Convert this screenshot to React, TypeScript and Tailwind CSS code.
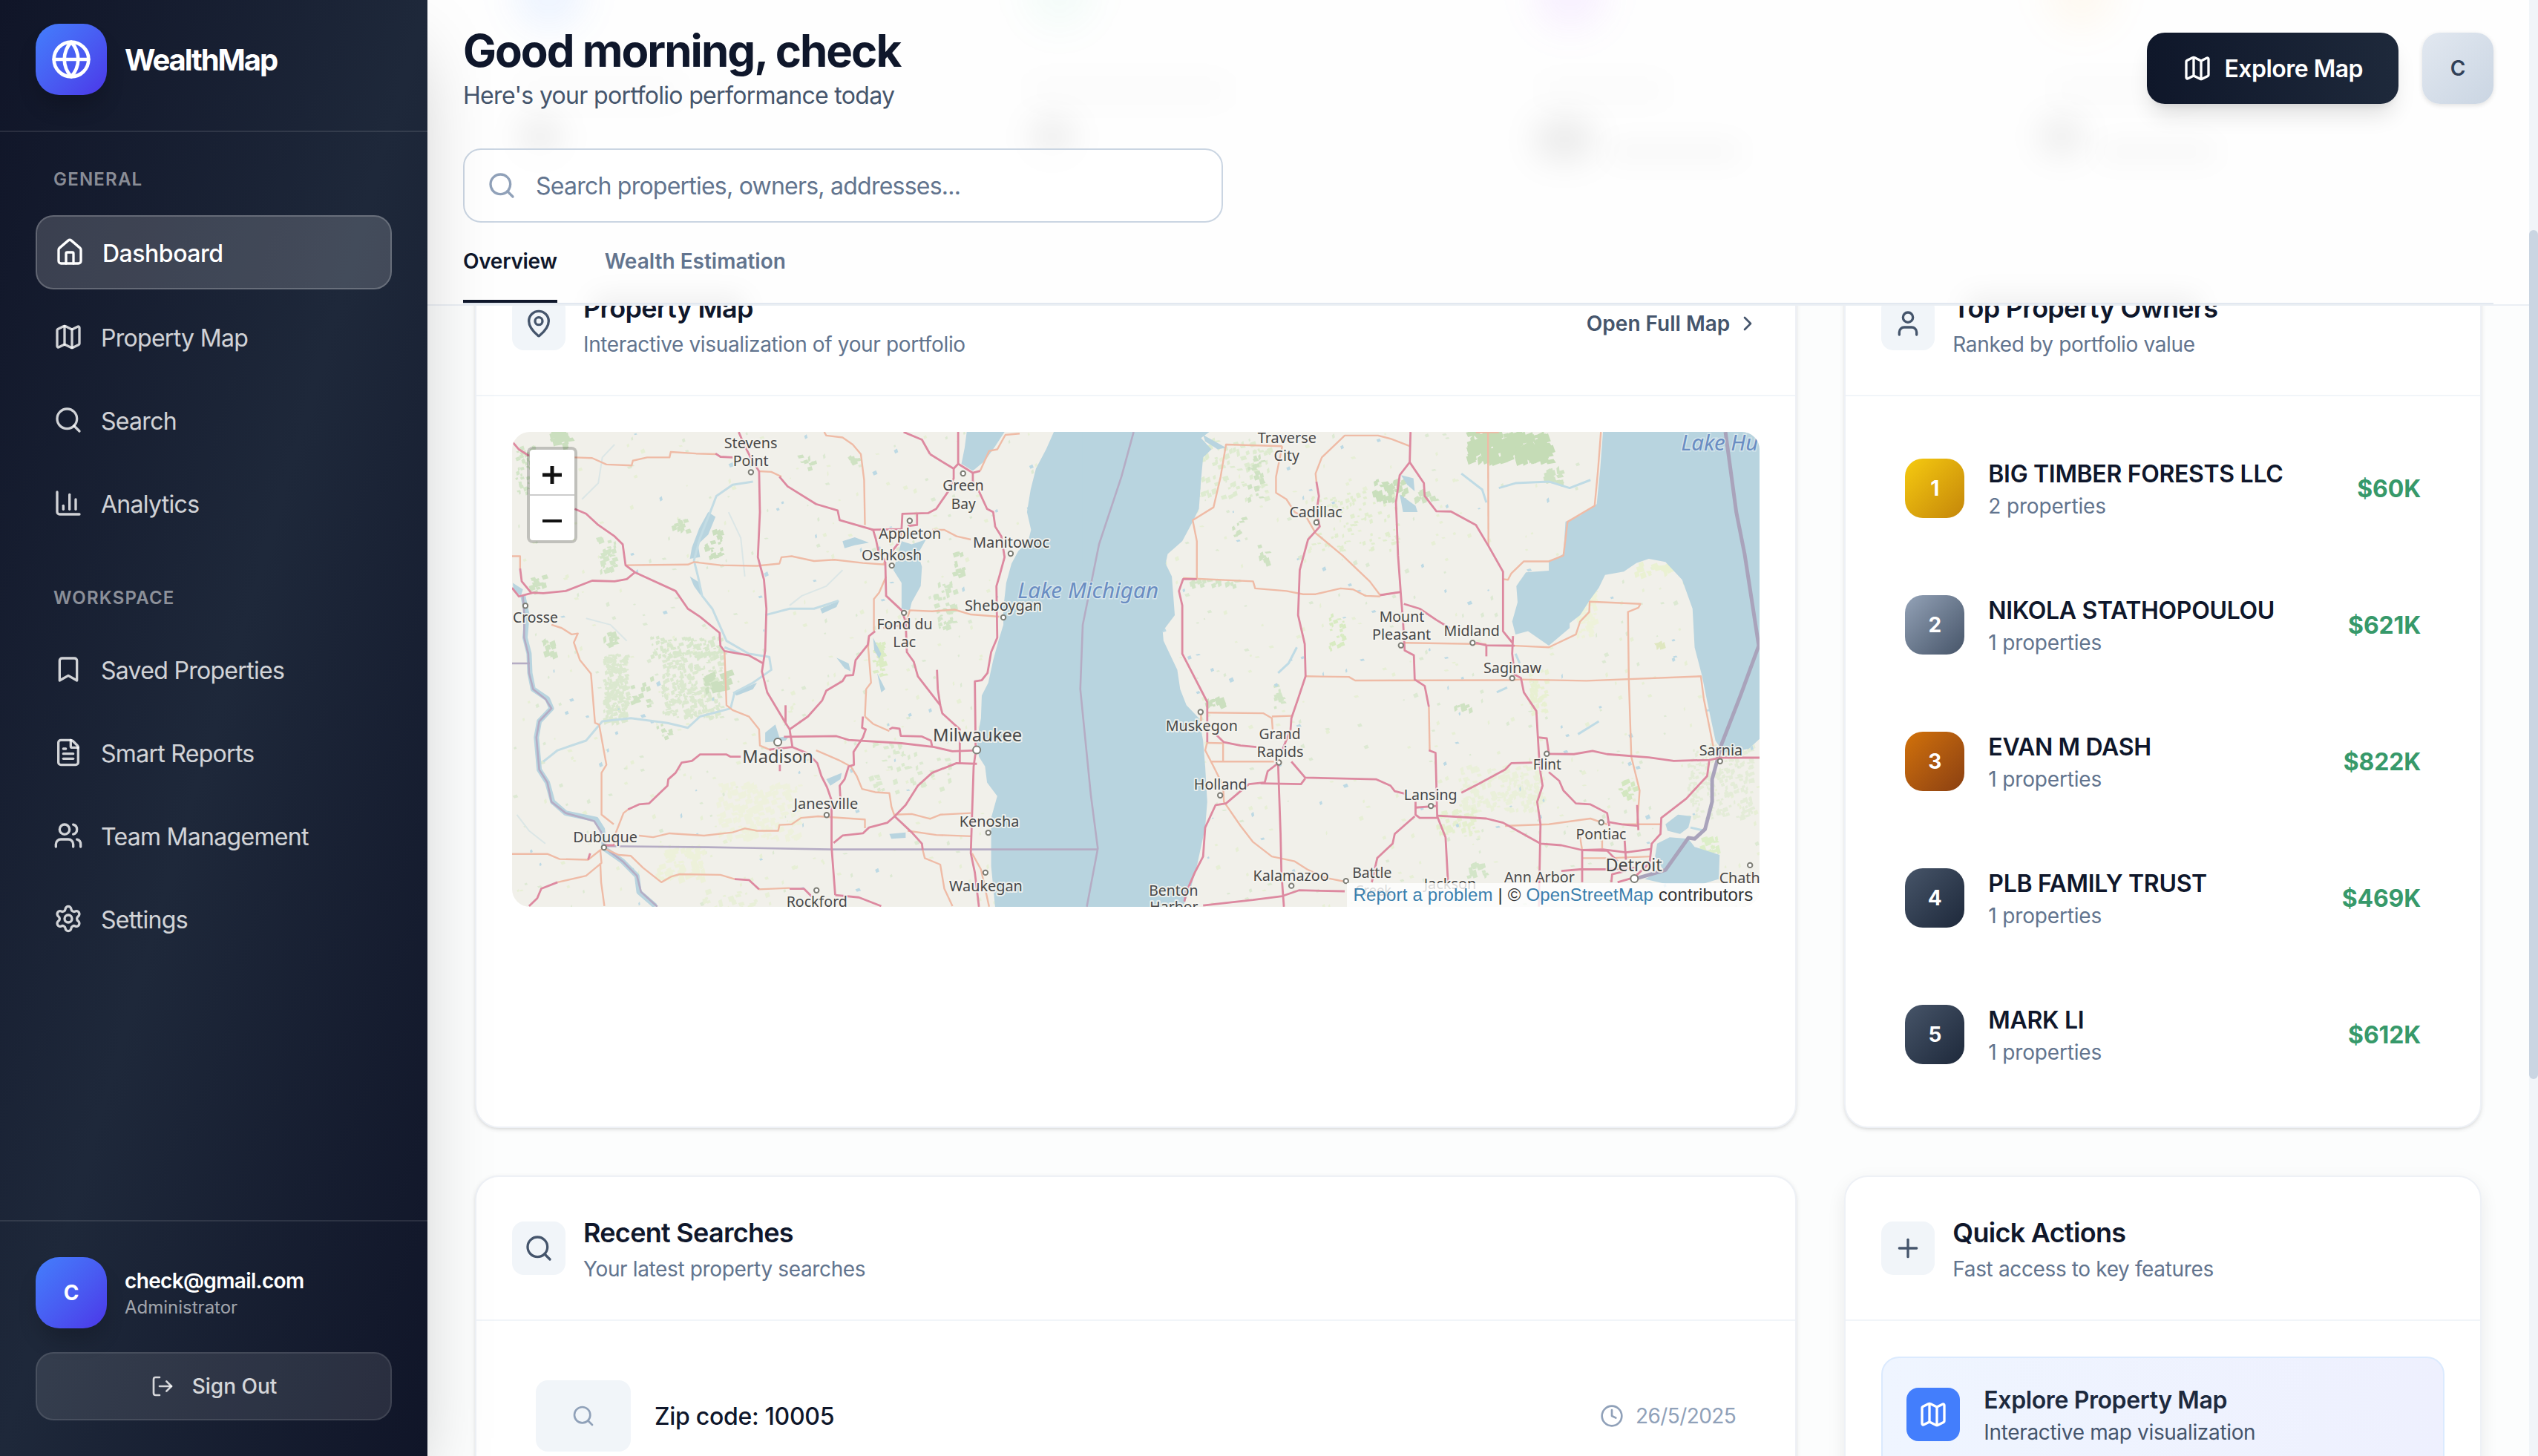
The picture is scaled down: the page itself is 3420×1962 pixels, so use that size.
import React from "react";
import {
  Bookmark,
  ChartColumn,
  ChevronRight,
  Clock,
  FileText,
  House,
  LogOut,
  Map as MapIcon,
  MapPin,
  Plus,
  Search,
  Settings,
  User,
  Users,
} from "lucide-react";

type IconType = React.ComponentType<{ className?: string; strokeWidth?: number }>;

function GlobeMark({ className }: { className?: string }) {
  return (
    <svg viewBox="0 0 24 24" fill="none" stroke="currentColor" strokeWidth="2" strokeLinecap="round" strokeLinejoin="round" className={className}>
      <circle cx="12" cy="12" r="10" />
      <path d="M2 12h20" />
      <path d="M12 2a15.3 15.3 0 0 1 4 10 15.3 15.3 0 0 1-4 10 15.3 15.3 0 0 1-4-10 15.3 15.3 0 0 1 4-10z" />
    </svg>
  );
}

const general: { label: string; icon: IconType; active?: boolean }[] = [
  { label: "Dashboard", icon: House, active: true },
  { label: "Property Map", icon: MapIcon },
  { label: "Search", icon: Search },
  { label: "Analytics", icon: ChartColumn },
];

const workspace: { label: string; icon: IconType; active?: boolean }[] = [
  { label: "Saved Properties", icon: Bookmark },
  { label: "Smart Reports", icon: FileText },
  { label: "Team Management", icon: Users },
  { label: "Settings", icon: Settings },
];

function NavGroup({ title, items }: { title: string; items: typeof general }) {
  return (
    <div>
      <div className="mb-8 px-6 text-[24px] leading-8 font-semibold tracking-[0.05em] text-white/50">{title}</div>
      <nav className="flex flex-col gap-4">
        {items.map(({ label, icon: Icon, active }) =>
          active ? (
            <a key={label} className="flex h-[100px] items-center gap-6 rounded-[24px] border-2 border-white/20 bg-white/[0.17] px-6 text-[32px] font-medium tracking-[-0.015em] text-white">
              <Icon className="size-10" />
              <span className="pt-[3px]">{label}</span>
            </a>
          ) : (
            <a key={label} className="flex h-24 items-center gap-6 rounded-[24px] px-6 text-[32px] tracking-[-0.022em] text-white/80">
              <Icon className="size-10" />
              <span className="pt-[3px]">{label}</span>
            </a>
          ),
        )}
      </nav>
    </div>
  );
}

function Sidebar() {
  return (
    <aside className="relative z-20 flex w-[576px] shrink-0 flex-col bg-linear-to-br from-[#101528] via-[#1e283a] to-[#101528] shadow-[0_50px_100px_-24px_rgba(0,0,0,0.25)]">
      <div className="flex items-center gap-6 border-b-2 border-white/10 px-12 pt-8 pb-12">
        <div className="flex size-24 items-center justify-center rounded-[32px] bg-linear-to-br from-[#437efc] to-[#4b35e8] text-white shadow-[0_20px_30px_-6px_rgba(0,0,0,0.2)]">
          <GlobeMark className="size-14" />
        </div>
        <span className="pt-[2px] text-[40px] leading-[56px] font-bold tracking-[-0.052em] text-white">WealthMap</span>
      </div>
      <div className="flex flex-1 flex-col gap-16 px-12 pt-12">
        <NavGroup title="GENERAL" items={general} />
        <NavGroup title="WORKSPACE" items={workspace} />
      </div>
      <div className="flex flex-col gap-8 border-t-2 border-white/10 p-12">
        <div className="flex items-center gap-6">
          <div className="flex size-24 items-center justify-center rounded-[32px] bg-linear-to-br from-[#437efc] to-[#4b35e8] text-[28px] font-bold text-white shadow-[0_20px_30px_-6px_rgba(0,0,0,0.2)]">C</div>
          <div>
            <div className="text-[28px] leading-10 font-semibold tracking-[-0.023em] text-white">check@gmail.com</div>
            <div className="text-[24px] leading-8 text-white/60">Administrator</div>
          </div>
        </div>
        <button className="flex h-[92px] items-center justify-center gap-6 rounded-[24px] border-2 border-white/10 bg-white/10 text-[28px] font-medium text-white/80">
          <LogOut className="size-8" />
          Sign Out
        </button>
      </div>
    </aside>
  );
}

/* Soft traces of the stat cards scrolled beneath the translucent header. */
function HeaderGhosts() {
  return (
    <div className="pointer-events-none absolute inset-0 overflow-hidden">
      <div className="absolute -top-14 left-[116px] size-24 rounded-full bg-blue-500/8 blur-[24px]" />
      <div className="absolute -top-14 left-[804px] size-24 rounded-full bg-emerald-500/4 blur-[24px]" />
      <div className="absolute -top-14 left-[1492px] size-24 rounded-full bg-purple-500/8 blur-[24px]" />
      <div className="absolute -top-14 left-[2180px] size-24 rounded-full bg-amber-500/5 blur-[24px]" />
      <div className="absolute top-[160px] left-[124px] h-12 w-14 rounded-full bg-black/8 blur-[22px]" />
      <div className="absolute top-[160px] left-[814px] h-12 w-14 rounded-full bg-black/8 blur-[22px]" />
      <div className="absolute top-[160px] left-[1492px] h-14 w-20 rounded-full bg-black/8 blur-[22px]" />
      <div className="absolute top-[160px] left-[2174px] h-12 w-14 rounded-full bg-black/8 blur-[22px]" />
      <div className="absolute top-[110px] left-[124px] h-6 w-[220px] rounded-full bg-black/2 blur-[20px]" />
      <div className="absolute top-[110px] left-[810px] h-6 w-[270px] rounded-full bg-black/2 blur-[20px]" />
      <div className="absolute top-[110px] left-[1500px] h-6 w-[170px] rounded-full bg-black/2 blur-[20px]" />
      <div className="absolute top-[110px] left-[2190px] h-6 w-[200px] rounded-full bg-black/2 blur-[20px]" />
      <div className="absolute top-[192px] left-[1590px] h-6 w-[180px] rounded-full bg-black/3 blur-[18px]" />
      <div className="absolute top-[192px] left-[2250px] h-6 w-[160px] rounded-full bg-black/3 blur-[18px]" />
      <div className="absolute top-[396px] left-[220px] h-10 w-[210px] rounded-full bg-black/5 blur-[16px]" />
      <div className="absolute top-[396px] left-[2070px] h-10 w-[320px] rounded-full bg-black/5 blur-[16px]" />
    </div>
  );
}

function Header() {
  return (
    <header className="relative z-10 h-[412px] shrink-0 border-b-2 border-slate-200/70 bg-[#fefefe] px-12 pt-8">
      <HeaderGhosts />
      <div className="relative flex h-[120px] items-center justify-between">
        <div>
          <h1 className="text-[60px] leading-[72px] font-bold tracking-[-0.033em] text-slate-900">Good morning, check</h1>
          <p className="-mb-px pt-px text-[32px] leading-[48px] tracking-[-0.021em] text-slate-600">Here's your portfolio performance today</p>
        </div>
        <div className="flex items-center gap-8">
          <button className="flex h-24 items-center gap-4 rounded-[24px] bg-linear-to-r from-[#0f172a] to-[#1e293b] px-12 text-[32px] font-semibold tracking-[-0.016em] text-white shadow-[0_20px_30px_-6px_rgba(0,0,0,0.12),0_8px_12px_-8px_rgba(0,0,0,0.12)]">
            <MapIcon className="size-10" />
            <span className="pt-[2px]">Explore Map</span>
          </button>
          <div className="flex size-24 items-center justify-center rounded-[24px] bg-linear-to-br from-slate-200 to-slate-300 text-[28px] font-semibold text-slate-700 shadow-[0_2px_6px_rgba(0,0,0,0.12)]">C</div>
        </div>
      </div>
      <div className="relative mt-12 flex h-[100px] w-[1024px] items-center gap-[26px] rounded-[24px] border-2 border-slate-300 bg-white/80 px-[30px]">
        <Search className="size-10 text-slate-400" />
        <span className="pt-[2px] text-[32px] tracking-[-0.024em] text-slate-500">Search properties, owners, addresses...</span>
      </div>
      <div className="relative flex gap-16 border-b-2 border-slate-200 text-[28px] leading-10 font-semibold">
        <div className="border-b-4 border-slate-900 py-8 tracking-[-0.01em] text-slate-900">Overview</div>
        <div className="border-b-4 border-transparent py-8 text-slate-500">Wealth Estimation</div>
      </div>
    </header>
  );
}

function CardHeader({ icon: Icon, title, subtitle, action }: { icon: IconType; title: string; subtitle: string; action?: React.ReactNode }) {
  return (
    <div className="flex h-[194px] items-center justify-between border-b-2 border-slate-100 px-12">
      <div className="flex items-center gap-6">
        <div className="flex size-[72px] items-center justify-center rounded-[16px] bg-slate-100 text-slate-600">
          <Icon className="size-10" />
        </div>
        <div>
          <h2 className="pb-[2px] text-[36px] leading-[54px] font-semibold tracking-[-0.02em] text-slate-900">{title}</h2>
          <p className="text-[28px] leading-10 tracking-[-0.013em] text-slate-500">{subtitle}</p>
        </div>
      </div>
      {action}
    </div>
  );
}

/* ------------------------------------------------------------------ map */

/* The map is traced on two sheets, west and east, each with its own grid. */
const WEST = "matrix(0.5485 0 0 0.4337 -10 -22)";
const EAST = "matrix(0.5612 0 0 0.4337 830 -22)";

type Label = [text: string, x1: number, x2: number, baseline: number, size?: number];

const westLabels: Label[] = [
  ["Stevens", 539, 670, 101],
  ["Point", 561, 648, 156],
  ["Green", 1076, 1177, 234],
  ["Bay", 1097, 1157, 290],
  ["Appleton", 919, 1072, 382],
  ["Manitowoc", 1150, 1338, 410],
  ["Oshkosh", 877, 1025, 450],
  ["Sheboygan", 1130, 1320, 607],
  ["Fond du", 914, 1051, 665],
  ["Lac", 954, 1010, 719],
  ["Crosse", 20, 131, 644],
  ["Madison", 584, 758, 1080, 24],
  ["Milwaukee", 1052, 1271, 1012, 24],
  ["Janesville", 710, 868, 1222],
  ["Kenosha", 1117, 1264, 1277],
  ["Dubuque", 168, 326, 1326],
  ["Waukegan", 1092, 1272, 1477],
  ["Rockford", 692, 842, 1527],
];

const eastLabels: Label[] = [
  ["Traverse", 311, 452, 86],
  ["City", 350, 411, 141],
  ["Cadillac", 387, 514, 315],
  ["Mount", 603, 711, 641],
  ["Pleasant", 586, 727, 697],
  ["Midland", 758, 892, 685],
  ["Saginaw", 853, 992, 799],
  ["Muskegon", 90, 263, 979],
  ["Grand", 314, 414, 1006],
  ["Rapids", 309, 421, 1061],
  ["Holland", 158, 286, 1162],
  ["Lansing", 662, 790, 1194],
  ["Flint", 972, 1040, 1100],
  ["Sarnia", 1371, 1475, 1055],
  ["Pontiac", 1075, 1196, 1317],
  ["Detroit", 1146, 1282, 1415, 24],
  ["Ann Arbor", 903, 1072, 1451],
  ["Jackson", 710, 836, 1471],
  ["Battle", 538, 633, 1437],
  ["Creek", 545, 632, 1492],
  ["Kalamazoo", 300, 482, 1446],
  ["Benton", 50, 168, 1491],
  ["Harbor", 52, 168, 1543],
  ["Chath", 1419, 1517, 1452],
];

const westDots = [[605, 176], [1126, 180], [995, 327], [1243, 429], [951, 466], [1225, 627], [981, 613], [51, 591], [791, 1241], [1188, 1296], [244, 1342], [1181, 1420], [766, 1475]];
const eastDots = [[452, 332], [655, 714], [827, 706], [922, 816], [174, 921], [362, 1078], [221, 1180], [727, 1213], [1005, 1051], [1421, 1074], [1136, 1264], [392, 1461], [523, 1446], [1493, 1397]];

const westMajor = [
  "M18 80 35 105 60 125",
  "M172 290 200 305 230 340 270 375 290 400 297 465 320 487 420 545 450 600 480 625 528 675 530 715 540 732 600 745 635 770",
  "M18 535 35 562 70 550 95 552 150 545 215 513 270 515 300 508 320 487",
  "M38 475 42 515 65 550",
  "M575 51 590 95 608 140 625 173",
  "M518 118 530 128 560 130",
  "M625 173 627 300 622 440 637 510 643 600 640 730 632 795 645 860 690 955 700 975 707 1030",
  "M675 190 695 220 765 275 818 295 823 325 905 355",
  "M905 355 912 385 918 420 935 455 937 560 975 605 985 640 988 735 1005 765 1015 810 1070 900 1075 925 1118 975 1118 1045",
  "M900 355 975 353",
  "M975 353 977 305 1040 303 1060 290 1090 235 1103 195 1103 165 1045 120",
  "M980 51 1025 75 1045 120",
  "M1114 51 1114 150 1103 165",
  "M1114 150 1150 178 1168 172",
  "M1013 305 1013 340 990 343",
  "M975 353 968 395 940 440",
  "M1150 178 1150 205 1165 235 1185 290 1200 300 1205 345 1220 375 1228 440 1215 500 1208 530 1210 690 1195 735 1186 800 1172 822 1155 826 1157 1045 1152 1090 1145 1360 1155 1420 1165 1526",
  "M690 900 690 955",
  "M700 975 745 935 780 885 790 855 830 825 838 808 856 806 862 760 892 712 895 685 910 670",
  "M686 998 815 996 845 1008 975 1018 1055 1030 1100 1043 1160 1040",
  "M1118 1045 1118 1080",
  "M1160 1082 1110 1080 1050 1110 1015 1150 985 1210 958 1245 940 1265 895 1280 880 1298 830 1305 808 1328",
  "M880 935 878 970 887 975 880 1000 857 1045 858 1085 845 1090 835 1130 823 1150 825 1195",
  "M945 975 952 970 970 973 973 995 1025 997 1047 1010 1050 1028",
  "M650 1038 707 1030 745 1050 768 1080 778 1120 792 1155 803 1195 803 1340 812 1490",
  "M676 1085 676 1105",
  "M580 1060 555 1060 545 1053 480 1053 460 1073 435 1078 420 1110 402 1130 400 1150 355 1205 330 1208 303 1224",
  "M1062 790 1064 850 1070 900",
  "M958 1245 1000 1295 1025 1330 1027 1350",
  "M812 1490 870 1497 925 1524",
  "M565 1440 600 1443 625 1472",
  "M60 1524 80 1500 90 1470 130 1450",
  "M210 1360 205 1380",
  "M247 1335 270 1335",
  "M700 1470 735 1470 755 1495",
];

const westMinor = [
  "M172 130 215 132 250 152 312 155 315 140 350 130 405 130 408 113 470 118 520 120",
  "M785 51 790 62 830 68 855 90 875 120 883 200 885 340",
  "M625 173 655 175 680 190",
  "M297 465 450 463 465 455 530 465 620 467 675 460 680 440 705 437 760 452 810 448 880 458 935 463",
  "M18 437 38 437 38 475",
  "M115 650 140 660 165 680 180 677 170 705 185 760 212 802 222 955 232 960 250 1085 238 1110 238 1240 268 1270",
  "M540 732 545 900 560 915 600 935 625 975 627 1025 655 1040",
  "M937 500 920 550 907 570 907 670",
  "M895 690 893 720 900 830 888 850 885 935",
  "M885 935 905 958 945 980",
  "M1050 355 1080 355 1110 375 1145 385",
  "M930 660 985 650 995 605 1050 608 1105 603 1145 618 1215 625",
  "M940 440 930 463",
  "M765 1040 820 1070 850 1090 865 1120 878 1160 910 1170 945 1173 950 1215 958 1245",
  "M330 1305 365 1310 405 1298 490 1305 560 1295 590 1283 620 1290 672 1290 675 1272 705 1270 728 1250 770 1245 885 1255 885 1282",
  "M268 1335 272 1300 292 1235 303 1224",
  "M247 1342 235 1350 205 1380 135 1378 105 1362 18 1362",
  "M245 1345 280 1365 310 1368 340 1405 385 1450 410 1432 430 1425 530 1427 565 1440",
  "M235 1350 238 1390 200 1430 130 1450",
  "M235 1390 237 1450 245 1524",
  "M625 1472 700 1468",
  "M958 1240 1000 1238 1045 1253 1070 1240 1145 1235",
  "M990 1290 1060 1303 1148 1307",
  "M1027 1350 1032 1375 1070 1395 1080 1470 1100 1524",
  "M1265 56 1230 60 1210 105 1190 110 1168 172",
  "M1148 1360 1170 1410 1190 1526",
];

const eastMajor = [
  "M678 51 676 145 652 185 643 270 648 435 655 560 660 640 664 730 686 745 688 820 712 840 722 905",
  "M676 145 710 210 712 250 740 297 775 298 835 340 865 405 900 485 900 670 922 705",
  "M452 205 458 250 452 300 460 345 432 385 412 480 408 620 424 710 426 810 408 880 392 940 390 975 370 1040",
  "M165 508 132 508 122 545 130 590 130 740 148 785 190 890 190 1015",
  "M655 548 605 558",
  "M662 585 700 600 740 635 772 660",
  "M835 706 860 714 928 715",
  "M860 714 860 748",
  "M924 685 922 740 928 805 943 815 950 860 980 918 986 1050 990 1110 995 1150 982 1200 990 1270 986 1526",
  "M985 1000 1005 1003 1010 1050",
  "M1005 1051 1070 1052 1115 1042 1150 1052 1250 1062 1310 1073 1395 1070 1421 1063 1516 1063",
  "M970 1078 920 1080 905 1100 845 1142 800 1172",
  "M210 990 230 1015 270 1025 308 1030",
  "M362 1078 335 1105 328 1140 290 1145 235 1205 210 1210 185 1280 180 1370 160 1420 140 1480 135 1510",
  "M392 1075 425 1125 595 1130 630 1150 640 1167 665 1175",
  "M425 1128 415 1145 318 1143",
  "M360 1080 366 1300 368 1420 374 1526",
  "M722 1040 738 1048 742 1245 762 1310 768 1450",
  "M690 1200 690 1240 700 1250 742 1250",
  "M690 1218 740 1213",
  "M688 1245 640 1300 635 1330 598 1375 585 1450",
  "M742 1243 860 1252 900 1265 990 1330 1040 1335 1090 1350 1150 1352 1175 1385",
  "M1010 1108 1035 1135 1045 1165 1075 1205 1110 1208 1150 1235 1155 1275",
  "M1150 1262 1185 1270 1225 1275",
  "M1222 1210 1225 1288",
  "M1395 1073 1390 1120 1340 1190 1280 1250 1278 1300 1257 1330 1252 1390 1215 1435 1175 1450",
  "M1090 1350 1090 1450",
  "M1192 1320 1195 1380",
  "M1090 1350 1140 1348 1195 1357 1255 1347",
  "M1040 1415 1085 1410 1150 1410 1220 1405",
  "M1160 1450 1162 1425 1195 1415",
  "M180 1522 300 1505 370 1493 410 1475 520 1478",
];

const eastMinor = [
  "M370 95 235 90 222 190 205 285 155 325 165 390 165 505",
  "M370 95 355 190 355 240 380 260 400 300 430 320 450 365 515 435 580 515 605 558 655 548",
  "M676 95 630 72 600 62 520 62 465 130 450 180 452 205",
  "M132 505 300 515 305 537 380 545 420 555 450 555 510 537 540 540 570 560 605 562",
  "M864 51 865 405",
  "M890 52 835 52",
  "M1135 51 1128 170 1120 280 1055 330 1045 435 1010 453 950 453 920 490 912 510 900 508",
  "M664 706 750 708 860 710",
  "M928 715 1010 720 1075 680 1085 640 1107 610 1108 578 1140 580 1230 585 1225 597 1200 610 1202 820 1208 1060 1228 1165 1222 1270",
  "M426 810 530 812 545 823 920 822 940 820 1100 824 1375 810 1382 880 1405 1030",
  "M722 905 724 1040",
  "M190 923 325 925 345 940 347 975",
  "M345 935 392 933",
  "M190 1015 185 1040 205 1090 228 1150 230 1200 270 1275 300 1325 345 1370 400 1385 430 1410 470 1435 520 1448",
  "M200 1075 350 1075",
  "M190 1017 228 1018 228 1075",
  "M175 925 175 950",
  "M905 1275 1010 1270 1110 1252 1150 1270",
  "M1180 1270 1278 1270",
  "M1085 1310 1090 1350",
  "M1138 1320 1138 1345",
  "M1090 1375 1150 1375 1255 1370",
];

const westRivers = [
  "M610 205 560 215 520 250 505 300 480 380 465 450 475 500 485 560 510 600 545 700 600 740 650 750 655 790 610 830 565 860 555 910 480 935 450 970 400 955 310 940 240 950 200 1010 130 1040 95 1075",
  "M640 620 700 600 760 600 820 575",
  "M540 720 580 740",
];

const westStreams = ["M190 260 230 210 240 130 270 90", "M830 480 790 530 730 560 700 590", "M550 300 580 380 590 500", "M100 1330 60 1290 30 1240", "M300 700 260 650 200 630"];

const westWaters = [
  "M1135 51H1228L1205 95 1180 140 1150 172 1122 150 1130 100Z",
  "M975 390 1000 400 1035 385 1015 430 1025 470 1022 530 1000 580 995 605 975 600 975 520 955 480Z",
  "M830 390 860 378 895 395 860 403 835 412Z",
  "M500 300 518 315 500 370 475 400 480 440 455 445 460 410 478 350Z",
  "M455 500 480 520 482 560 465 530Z",
  "M640 985 665 960 675 1000 700 995 690 1010 640 1015Z",
  "M790 1130 828 1110 825 1130 800 1150Z",
  "M775 600 822 575 815 595 780 615Z",
  "M815 752 845 770 850 795 835 785Z",
  "M905 690 925 740 920 755 908 730Z",
  "M915 800 935 850 925 860Z",
  "M945 1300 985 1295 985 1312 950 1315Z",
  "M20 520 45 540 40 560 22 545Z",
  "M560 860 620 830 610 850 570 870Z",
];

const eastWaters = [
  "M655 185 685 195 688 235 670 215Z",
  "M652 245 690 280 695 300 660 300Z",
  "M180 60 235 100 215 105 185 80Z",
  "M1320 1240 1352 1245 1345 1280 1325 1300 1295 1290 1290 1270Z",
];

function seeded(seed: number) {
  let s = seed;
  return () => {
    s = (s * 16807) % 2147483647;
    return s / 2147483647;
  };
}

/* Clusters of small irregular patches: [x, y, spreadX, spreadY, count, size, colour]. */
const clusters: [number, number, number, number, number, number, string][] = [
  [62, 6, 12, 10, 22, 7, "#cbdfbf"],
  [18, 50, 14, 34, 60, 4, "#d3e5c8"],
  [270, 150, 12, 18, 24, 5, "#cbdfbf"],
  [225, 125, 12, 10, 12, 5, "#cfe2c3"],
  [125, 165, 12, 22, 30, 5, "#d3e5c8"],
  [138, 345, 16, 46, 260, 4, "#dbe8cf"],
  [240, 340, 40, 44, 330, 4, "#dbe8cf"],
  [235, 290, 50, 14, 110, 4, "#d8e7cc"],
  [272, 335, 16, 12, 22, 7, "#cbdfbf"],
  [172, 350, 14, 20, 14, 5, "#cfe2c3"],
  [32, 205, 12, 12, 16, 5, "#cfe2c3"],
  [130, 278, 8, 8, 10, 6, "#cfe2c3"],
  [48, 290, 10, 9, 10, 6, "#cfe2c3"],
  [580, 235, 14, 34, 44, 5, "#d3e5c8"],
  [600, 180, 8, 18, 14, 5, "#cfe2c3"],
  [395, 40, 12, 8, 8, 5, "#cfe2c3"],
  [452, 36, 8, 5, 6, 6, "#cfe2c3"],
  [492, 305, 7, 22, 30, 5, "#dbecc4"],
  [330, 510, 56, 38, 180, 6, "#eef1dd"],
  [225, 580, 32, 22, 80, 6, "#edf1da"],
  [530, 450, 60, 36, 50, 5, "#dbe9cf"],
  [200, 400, 12, 12, 8, 5, "#cfe2c3"],
  [300, 630, 50, 16, 30, 5, "#e8efd8"],
  [960, 50, 60, 40, 100, 5, "#deebd0"],
  [1000, 60, 10, 30, 20, 5, "#cfe2c3"],
  [1180, 78, 22, 14, 38, 6, "#c9dfbc"],
  [1130, 120, 60, 40, 100, 4, "#e1edcf"],
  [1336, 18, 52, 18, 150, 9, "#c5dcb6"],
  [1370, 30, 22, 9, 40, 10, "#c5dcb6"],
  [1230, 86, 16, 10, 12, 6, "#cfe2c3"],
  [1400, 58, 12, 10, 18, 6, "#cfe2c3"],
  [940, 203, 36, 4, 20, 5, "#d3e5c8"],
  [1110, 270, 10, 24, 24, 4, "#d8ebc2"],
  [945, 365, 12, 6, 16, 6, "#cbdfbf"],
  [1280, 370, 12, 5, 10, 5, "#cfe2c3"],
  [1330, 480, 56, 30, 190, 5, "#eaf0da"],
  [1270, 525, 26, 18, 50, 5, "#e5efd0"],
  [1380, 350, 12, 30, 40, 5, "#e8f0d2"],
  [1445, 235, 12, 40, 70, 6, "#eef2da"],
  [1535, 185, 24, 8, 24, 6, "#eaf1d2"],
  [1545, 285, 7, 3, 8, 5, "#dfe7c0"],
  [1625, 470, 44, 50, 260, 4, "#e4ecd8"],
  [1610, 560, 14, 14, 30, 6, "#dceec8"],
  [1030, 355, 5, 16, 12, 5, "#d3e5c8"],
  [1300, 590, 14, 10, 16, 5, "#d3e5c8"],
  [1500, 480, 10, 14, 14, 5, "#d3e7c0"],
  [975, 130, 10, 16, 10, 5, "#cfe2c3"],
  [1010, 165, 6, 12, 8, 5, "#cfe2c3"],
];

function Patches() {
  const rnd = seeded(4217);
  const out: React.ReactNode[] = [];
  clusters.forEach(([cx, cy, sx, sy, n, size, fill], k) => {
    let d = "";
    for (let i = 0; i < n; i++) {
      const x = cx + (rnd() * 2 - 1) * sx;
      const y = cy + (rnd() * 2 - 1) * sy;
      const w = size * (0.5 + rnd());
      const h = size * (0.4 + rnd());
      d += `M${x.toFixed(1)} ${y.toFixed(1)}l${w.toFixed(1)} ${(-h * 0.4).toFixed(1)} ${(w * 0.3).toFixed(1)} ${h.toFixed(1)} ${(-w).toFixed(1)} ${(h * 0.4).toFixed(1)}z`;
    }
    out.push(<path key={k} d={d} fill={fill} />);
  });
  let green = "";
  let lime = "";
  let blue = "";
  for (let i = 0; i < 1100; i++) {
    const x = rnd() * 1681;
    const y = rnd() * 640;
    const w = 1.5 + rnd() * 4;
    const h = 1.5 + rnd() * 4;
    const seg = `M${x.toFixed(1)} ${y.toFixed(1)}l${w.toFixed(1)} ${(-h * 0.5).toFixed(1)} ${(w * 0.4).toFixed(1)} ${h.toFixed(1)} ${(-w).toFixed(1)} ${(h * 0.4).toFixed(1)}z`;
    if (i % 6 < 2) green += seg;
    else if (i % 6 < 5) lime += seg;
    else blue += seg;
  }
  return (
    <g>
      <path d={lime} fill="#e7efd6" />
      <path d={green} fill="#dde9d3" />
      {out}
      <path d={blue} fill="#bdd9e4" />
    </g>
  );
}

function Strokes({ paths, color, width }: { paths: string[]; color: string; width: number }) {
  return (
    <g fill="none" stroke={color} strokeWidth={width} strokeLinejoin="round">
      {paths.map((d) => (
        <path key={d} d={d} vectorEffect="non-scaling-stroke" />
      ))}
    </g>
  );
}

function Labels({ labels, kx, ox }: { labels: Label[]; kx: number; ox: number }) {
  return (
    <g fill="#474747" stroke="#f5f4ef" strokeOpacity="0.85" strokeWidth="4" strokeLinejoin="round" paintOrder="stroke" fontFamily="'Noto Sans', sans-serif">
      {labels.map(([text, x1, x2, base, size]) => (
        <text key={text} x={x1 * kx + ox} y={base * 0.4337 - 22} fontSize={size ?? 20.5} textLength={(x2 - x1) * kx} lengthAdjust="spacingAndGlyphs">
          {text}
        </text>
      ))}
    </g>
  );
}

function MapCanvas() {
  const water = "#b8d4df";
  return (
    <svg viewBox="0 0 1681 640" preserveAspectRatio="none" className="block h-full w-full">
      <rect width="1681" height="640" fill="#f1f0ea" />
      <Patches />
      <g transform={WEST} fill={water}>
        <path d="M1349 51 1330 105 1305 165 1292 230 1283 300 1293 355 1285 395 1262 420 1245 460 1232 520 1225 600 1225 650 1213 700 1200 760 1188 830 1172 870 1170 940 1160 1010 1165 1060 1180 1090 1185 1140 1210 1182 1195 1250 1195 1400 1205 1530H1610V51Z" />
        {westWaters.map((d) => (
          <path key={d} d={d} />
        ))}
      </g>
      <g transform={EAST} fill={water}>
        <path d="M-110 51H195L175 70 200 105 180 130 175 200 170 290 155 330 130 390 95 430 90 460 105 500 112 620 83 670 85 700 118 790 125 850 140 900 170 940 180 1010 185 1090 190 1200 185 1280 165 1400 150 1470 130 1530H-110Z" />
        <path d="M1140 51 1133 170 1125 275 1085 310 1050 330 1045 430 1010 455 1010 482 955 487 932 530 935 580 922 640 930 680 960 670 1010 715 1060 660 1060 645 1085 620 1110 570 1130 535 1145 495 1190 485 1220 458 1250 445 1290 455 1330 510 1355 600 1360 720 1378 810 1392 900 1410 1010 1430 1048 1490 1035 1520 1000V51Z" />
        <path d="M1270 1330 1300 1310 1345 1315 1360 1340 1420 1365 1418 1440 1380 1455 1290 1455 1240 1440 1285 1412 1265 1370Z" />
        {eastWaters.map((d) => (
          <path key={d} d={d} />
        ))}
      </g>
      <g transform={WEST}>
        <Strokes paths={westStreams} color="#dbe6e6" width={2} />
        <Strokes paths={westRivers} color="#c3dce4" width={3} />
        <Strokes paths={["M45 560 55 620 50 690 60 740 62 800 70 850 105 880 115 910 85 950 78 1000 85 1100 105 1140 118 1200 150 1235 225 1255 240 1285 245 1342", "M245 1345 290 1385 325 1430 330 1480 370 1524"]} color={water} width={7} />
        <Strokes paths={["M45 560 48 620 48 690 58 740 60 800 70 850 100 880 115 910 85 950 78 1000 85 1100 105 1140 115 1200 150 1235 220 1260 240 1300 245 1342 290 1385 325 1430 335 1480 375 1526", "M18 770H62", "M247 1338 500 1341 800 1348H1457", "M1545 51 1515 190 1460 400 1420 650 1414 850 1440 1180 1457 1345 1430 1526"]} color="#b5acc4" width={2.6} />
        <Strokes paths={westMinor} color="#efbba6" width={2.4} />
        <Strokes paths={westMajor} color="#dd89a0" width={2.8} />
      </g>
      <g transform={EAST}>
        <Strokes paths={["M800 180 850 230 860 270", "M890 225 930 210 1010 205 1060 225 1110 200", "M405 720 385 770 360 800", "M930 740 940 770", "M1130 950 1080 990", "M885 860 910 845", "M1350 1280 1385 1290"]} color="#bfdbe5" width={3} />
        <Strokes paths={["M1434 51 1460 300 1480 430 1514 715 1470 870 1425 1020 1402 1130 1402 1200 1385 1285 1360 1315 1345 1312 1290 1412 1215 1440"]} color="#a9a3bb" width={5} />
        <Strokes paths={eastMinor} color="#efbba6" width={2.4} />
        <Strokes paths={eastMajor} color="#dd89a0" width={2.8} />
      </g>
      <g fill="#fff" stroke="#7d7d75" strokeWidth="2">
        {westDots.map(([x, y]) => (
          <circle key={`w${x}`} cx={x * 0.5485 - 10} cy={y * 0.4337 - 22} r="3.2" />
        ))}
        {eastDots.map(([x, y]) => (
          <circle key={`e${x}`} cx={x * 0.5612 + 830} cy={y * 0.4337 - 22} r="3.2" />
        ))}
        <circle cx="358" cy="418" r="5" />
        <circle cx="626" cy="428.5" r="5" />
        <circle cx="1512" cy="602" r="5" />
      </g>
      <Labels labels={westLabels} kx={0.5485} ox={-10} />
      <Labels labels={eastLabels} kx={0.5612} ox={830} />
      <g fill="#6a8dc2" stroke="#dbe9ef" strokeOpacity="0.8" strokeWidth="3" paintOrder="stroke" fontFamily="'Noto Sans', sans-serif" fontStyle="italic" fontSize="29">
        <text x="681" y="224" textLength="190" lengthAdjust="spacingAndGlyphs">Lake Michigan</text>
        <text x="1575" y="25" textLength="104" lengthAdjust="spacingAndGlyphs">Lake Hu</text>
      </g>
    </svg>
  );
}

function MapPanel() {
  return (
    <div className="relative h-[640px] overflow-hidden rounded-[24px]">
      <MapCanvas />
      <div className="absolute top-5 left-5 w-[68px] overflow-hidden rounded-[8px] border-4 border-black/20 bg-white bg-clip-padding">
        <div className="flex h-[62px] items-center justify-center border-b-2 border-[#ccc] pt-2">
          <svg viewBox="0 0 26 26" className="size-[26px]" fill="#111">
            <path d="M10.5 1h5v9.5H26v5H15.5V25h-5v-9.5H0v-5h10.500z" />
          </svg>
        </div>
        <div className="flex h-[60px] items-center justify-center pt-2">
          <div className="h-1 w-[26px] bg-[#111]" />
        </div>
      </div>
      <div className="absolute right-0 bottom-0 h-8 bg-white/80 px-[9px] font-['Liberation_Sans',Arial,sans-serif] text-[24px] leading-[31px] tracking-[0.007em] whitespace-nowrap text-[#333]">
        <span className="text-[#3a7fae]">Report a problem</span> | © <span className="text-[#3a7fae]">OpenStreetMap</span> contributors
      </div>
    </div>
  );
}

/* --------------------------------------------------------------- owners */

const owners = [
  { name: "BIG TIMBER FORESTS LLC", count: "2 properties", value: "$60K", tone: "from-[#f6cb10] to-[#c4860a]" },
  { name: "NIKOLA STATHOPOULOU", count: "1 properties", value: "$621K", tone: "from-[#94a3b8] to-[#475569]" },
  { name: "EVAN M DASH", count: "1 properties", value: "$822K", tone: "from-[#d27208] to-[#8b4011]" },
  { name: "PLB FAMILY TRUST", count: "1 properties", value: "$469K", tone: "from-[#475569] to-[#1e293b]" },
  { name: "MARK LI", count: "1 properties", value: "$612K", tone: "from-[#475569] to-[#1e293b]" },
];

function OwnerList() {
  return (
    <div className="flex flex-col gap-8 p-12">
      {owners.map((o, i) => (
        <div key={o.name} className="flex h-[152px] items-center gap-8 px-8">
          <div className={`flex size-20 items-center justify-center rounded-[24px] bg-linear-to-br text-[28px] font-bold text-white ${o.tone}`}>{i + 1}</div>
          <div className="flex-1">
            <div className="-mb-px pt-px text-[32px] leading-[48px] font-semibold tracking-[-0.01em] text-slate-900">{o.name}</div>
            <div className="text-[28px] leading-10 tracking-[-0.006em] text-slate-500">{o.count}</div>
          </div>
          <div className="pt-[2px] text-[32px] leading-[48px] font-bold tracking-[-0.005em] text-[#37996a]">{o.value}</div>
        </div>
      ))}
    </div>
  );
}

const card = "overflow-hidden rounded-[32px] border-2 border-[#eef1f6] bg-white shadow-[0_2px_6px_rgba(0,0,0,0.1),0_2px_4px_-2px_rgba(0,0,0,0.1)]";

export default function App() {
  return (
    <div className="flex h-[1962px] w-full overflow-hidden bg-[#fcfdfd] font-['Inter',sans-serif]">
      <Sidebar />
      <main className="flex min-w-0 flex-1 flex-col">
        <Header />
        <div className="-mt-[74px] grid grid-cols-3 gap-16 px-16">
          <section className={`col-span-2 h-[1182px] ${card}`}>
            <CardHeader
              icon={MapPin}
              title="Property Map"
              subtitle="Interactive visualization of your portfolio"
              action={
                <a className="flex items-center gap-2 text-[28px] font-semibold text-slate-600">
                  Open Full Map
                  <ChevronRight className="size-8" />
                </a>
              }
            />
            <div className="p-12">
              <MapPanel />
            </div>
          </section>
          <section className={`h-[1182px] ${card}`}>
            <CardHeader icon={User} title="Top Property Owners" subtitle="Ranked by portfolio value" />
            <OwnerList />
          </section>
          <section className={`col-span-2 h-[600px] ${card}`}>
            <CardHeader icon={Search} title="Recent Searches" subtitle="Your latest property searches" />
            <div className="p-12">
              <div className="flex h-40 items-center gap-8 px-8">
                <div className="flex h-24 w-32 items-center justify-center rounded-[16px] bg-slate-100 text-slate-400">
                  <Search className="size-8" />
                </div>
                <div className="flex-1 pt-[2px] text-[32px] font-medium tracking-[-0.009em] text-slate-900">Zip code: 10005</div>
                <div className="flex items-center gap-4 text-[28px] tracking-[-0.02em] text-slate-400">
                  <Clock className="size-8" />
                  26/5/2025
                </div>
              </div>
            </div>
          </section>
          <section className="h-[600px] overflow-hidden rounded-[32px] border-2 border-[#eef1f6] bg-white shadow-[0_8px_24px_rgba(0,0,0,0.08)]">
            <CardHeader icon={Plus} title="Quick Actions" subtitle="Fast access to key features" />
            <div className="p-12">
              <div className="flex h-[156px] items-center gap-8 rounded-[24px] border-2 border-blue-100 bg-linear-to-r from-[#eff5ff] to-[#eef0fe] px-8">
                <div className="flex size-[72px] items-center justify-center rounded-[16px] bg-[#437efc] text-white">
                  <MapIcon className="size-10" />
                </div>
                <div>
                  <div className="-mb-px pt-px text-[32px] leading-[48px] font-semibold tracking-[-0.012em] text-slate-800">Explore Property Map</div>
                  <div className="text-[28px] leading-10 tracking-[-0.012em] text-slate-600">Interactive map visualization</div>
                </div>
              </div>
            </div>
          </section>
        </div>
      </main>
      <div className="relative z-10 w-3 shrink-0 bg-slate-100 pt-[310px]">
        <div className="h-[1144px] rounded-full bg-slate-300" />
      </div>
    </div>
  );
}
